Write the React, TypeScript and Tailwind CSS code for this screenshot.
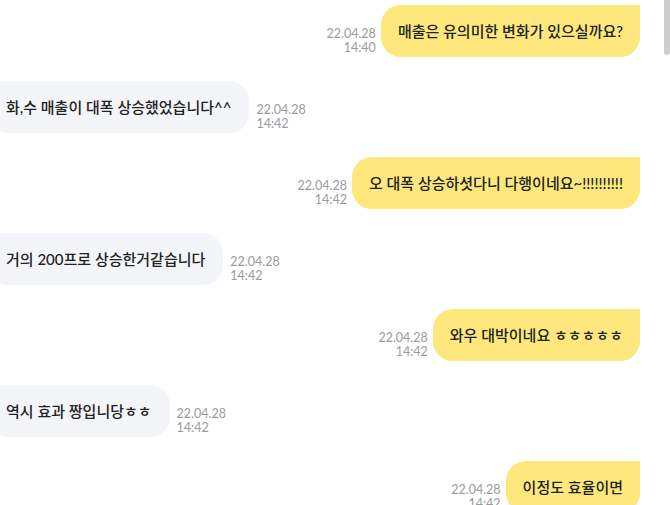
import React from "react";

type Msg = { side: "me" | "them"; text: string; date: string; time: string };

const messages: Msg[] = [
  { side: "me", text: "매출은 유의미한 변화가 있으실까요?", date: "22.04.28", time: "14:40" },
  { side: "them", text: "화,수 매출이 대폭 상승했었습니다^^", date: "22.04.28", time: "14:42" },
  { side: "me", text: "오 대폭 상승하셧다니 다행이네요~!!!!!!!!!!", date: "22.04.28", time: "14:42" },
  { side: "them", text: "거의 200프로 상승한거같습니다", date: "22.04.28", time: "14:42" },
  { side: "me", text: "와우 대박이네요 ㅎㅎㅎㅎㅎ", date: "22.04.28", time: "14:42" },
  { side: "them", text: "역시 효과 짱입니당ㅎㅎ", date: "22.04.28", time: "14:42" },
  { side: "me", text: "이정도 효율이면", date: "22.04.28", time: "14:42" },
];

const bodyFont = { fontFamily: 'Lato, "Noto Sans CJK KR", sans-serif' };

function Stamp({ date, time, align }: { date: string; time: string; align: "left" | "right" }) {
  return (
    <div
      className={`flex flex-col mb-[2px] text-[12.5px] leading-[14px] text-[#9a9ba0] ${align === "right" ? "items-end" : "items-start"}`}
      style={{ fontFamily: 'Lato, "Noto Sans", sans-serif' }}
    >
      <span>{date}</span>
      <span>{time}</span>
    </div>
  );
}

function Row({ m }: { m: Msg }) {
  if (m.side === "me") {
    return (
      <div className="flex flex-row justify-end items-end gap-[5px] shrink-0">
        <Stamp date={m.date} time={m.time} align="right" />
        <div
          className="h-[52px] flex items-center px-[17px] rounded-[20px] rounded-tr-none bg-[#fee87d] text-[15px] font-medium text-[#222222] whitespace-nowrap"
          style={bodyFont}
        >
          {m.text}
        </div>
      </div>
    );
  }
  return (
    <div className="flex flex-row justify-start items-end gap-[7px] -ml-[12px] shrink-0">
      <div
        className="h-[52px] flex items-center px-[18px] rounded-[20px] rounded-tl-none bg-[#f4f5f9] text-[15px] font-medium text-[#222222] whitespace-nowrap"
        style={bodyFont}
      >
        {m.text}
      </div>
      <Stamp date={m.date} time={m.time} align="left" />
    </div>
  );
}

export default function App() {
  return (
    <div className="w-[670px] h-[505px] overflow-hidden bg-white flex flex-row">
      <div className="flex-1 flex flex-col gap-[24px] pt-[5px] pr-[24px] overflow-hidden">
        {messages.map((m, i) => (
          <Row key={i} m={m} />
        ))}
      </div>
      <div className="w-[6px] flex flex-col">
        <div className="h-[55px] bg-[#cdcdcd] rounded-b-[3px]" />
      </div>
    </div>
  );
}
